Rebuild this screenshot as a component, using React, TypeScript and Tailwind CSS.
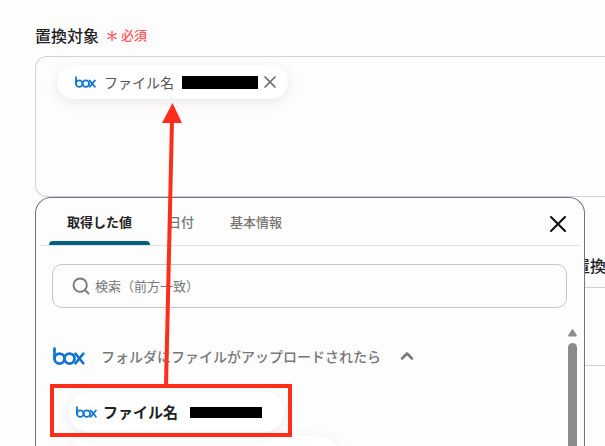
import { ChevronUp, Search, X } from 'lucide-react';

const BoxLogo = ({ className }: { className: string }) => (
    <svg viewBox="0 0 64 36" className={className} fill="none" stroke="#0f74d3" strokeWidth="5.5" strokeLinecap="round" role="img" aria-label="box">
        <path d="M3 3v20" />
        <circle cx="13" cy="23" r="10" />
        <circle cx="33" cy="23" r="10" />
        <path d="M45 13.5 L60.5 32.5" />
        <path d="M60.5 13.5 L45 32.5" />
    </svg>
);

const tabs = ['取得した値', '日付', '基本情報'];

const TargetField = () => (
    <section>
        <div className="flex h-[22px] items-center gap-2">
            <h2 id="target-label" className="text-base font-medium text-[#222]">置換対象</h2>
            <span className="flex items-center gap-1 text-[13px] font-medium text-[#ff5560]">
                <svg viewBox="0 0 10 10" className="mt-0.5 size-2.5" stroke="currentColor" strokeWidth="1.4" strokeLinecap="round" aria-hidden="true">
                    <path d="M5 0.6v8.8M1 2.7l8 4.6M9 2.7L1 7.3" />
                </svg>
                必須
            </span>
        </div>
        <div
            role="group"
            aria-labelledby="target-label"
            className="mt-2.5 -mr-5 h-[141px] rounded-l-xl border border-r-0 border-[#cdd2de] pt-2 pl-[21px]"
        >
            <div className="flex h-[34px] w-fit items-center rounded-full bg-white pr-2 pl-[18px] shadow-[0_3px_14px_rgba(60,40,80,0.11)]">
                <BoxLogo className="h-3 w-[21px]" />
                <span className="ml-2 text-sm text-[#555]">ファイル名</span>
                <span className="ml-2 h-[13px] w-[76px] bg-black" />
                <button type="button" aria-label="削除" className="ml-0.5 text-[#6b6b6b]">
                    <X className="size-5" strokeWidth={2} />
                </button>
            </div>
        </div>
    </section>
);

const ReplaceField = () => (
    <section className="mt-[57px] -mr-5 ml-auto w-[31px]">
        <h2 className="h-[22px] text-base leading-[22px] font-medium whitespace-nowrap text-[#222]">置換</h2>
        <div className="mt-[11px] h-[79px] border-y border-[#d0d0d4]" />
    </section>
);

const ValueTabs = () => (
    <div className="mx-1 flex items-start border-b border-[#e0e1e4] pl-[9px]">
        <div role="tablist" className="flex">
            {tabs.map((tab, i) => (
                <button
                    key={tab}
                    type="button"
                    role="tab"
                    aria-selected={i === 0}
                    className={`relative h-[47px] px-[18px] text-[13px] ${i === 0 ? 'font-bold text-[#222]' : 'font-medium text-[#777]'}`}
                >
                    {tab}
                    {i === 0 && <span className="absolute inset-x-0 bottom-0 h-1 rounded-t bg-[#00617f]" />}
                </button>
            ))}
        </div>
        <button type="button" aria-label="閉じる" className="mt-3 mr-2 ml-auto text-[#111]">
            <X className="size-7" strokeWidth={1.8} />
        </button>
    </div>
);

const ValueList = () => (
    <div className="flex min-h-0 grow justify-between overflow-hidden pt-5 pr-[7px]">
        <div className="pl-[17px]">
            <button type="button" className="mt-2 flex h-10 items-center text-[#777]">
                <BoxLogo className="h-[18px] w-8" />
                <span className="ml-4 text-sm font-medium">フォルダにファイルがアップロードされたら</span>
                <ChevronUp className="ml-4 size-5" strokeWidth={3} />
            </button>
            <div className="relative mt-4 ml-4 flex">
                <button
                    type="button"
                    className="flex h-10 items-center rounded-full bg-white pr-[22px] pl-[7px] shadow-[0_3px_14px_rgba(60,40,80,0.09)]"
                >
                    <BoxLogo className="h-3 w-[21px]" />
                    <span className="ml-1.5 text-[15px] font-bold text-[#222]">ファイル名</span>
                    <span className="ml-3 h-[11px] w-[72px] bg-black" />
                </button>
                {/* highlight frame */}
                <div className="absolute -top-2 -left-[19px] h-[53px] w-[242px] border-4 border-[#ff2d1a]" />
            </div>
            <div className="mt-1 ml-4 h-10 w-[270px] rounded-full bg-white shadow-[0_3px_14px_rgba(60,40,80,0.09)]" />
        </div>
        <div className="flex w-[9px] flex-col gap-1.5">
            <svg viewBox="0 0 9 8" className="mt-px h-2 w-[9px] shrink-0" fill="#8b8a8c">
                <path d="M4.5 0.3 C5 0.3 5.3 0.7 5.6 1.2 L8.7 6 C9.1 7 8.8 7.6 8 7.6 H1 C0.2 7.6 -0.1 7 0.3 6 L3.4 1.2 C3.7 0.7 4 0.3 4.5 0.3Z" />
            </svg>
            <div className="grow rounded-t-full bg-[#8b8a8c]" />
        </div>
    </div>
);

const ValuePicker = () => (
    <div className="absolute top-[197px] right-5 bottom-0 left-[35px] flex flex-col rounded-t-2xl border border-b-0 border-[#77757a] bg-[#fefdfe]">
        <ValueTabs />
        <label className="mt-[18px] mr-[17px] ml-4 flex h-11 shrink-0 items-center rounded-[10px] border border-[#c6c6ca] pl-[18px]">
            <Search className="size-5 shrink-0 text-[#777]" strokeWidth={2.2} />
            <input
                type="text"
                aria-label="検索"
                placeholder="検索（前方一致）"
                className="ml-1 grow bg-transparent text-[13px] outline-none placeholder:text-[#777]"
            />
        </label>
        <ValueList />
    </div>
);

export default function App() {
    return (
        <main className="relative h-screen overflow-hidden bg-[#fefdfe] pt-6 pr-5 pl-[35px] font-['Noto_Sans_CJK_JP',sans-serif]">
            <TargetField />
            <ReplaceField />
            <ValuePicker />
            {/* arrow from the picked value to the field */}
            <svg viewBox="0 0 24 284" className="pointer-events-none absolute top-[102px] left-40 h-[284px] w-6">
                <path d="M12 18 L6 284" stroke="#ff2d1a" strokeWidth="4" fill="none" />
                <path d="M12.5 1 L22 21 H2Z" fill="#ff2d1a" />
            </svg>
        </main>
    );
}
